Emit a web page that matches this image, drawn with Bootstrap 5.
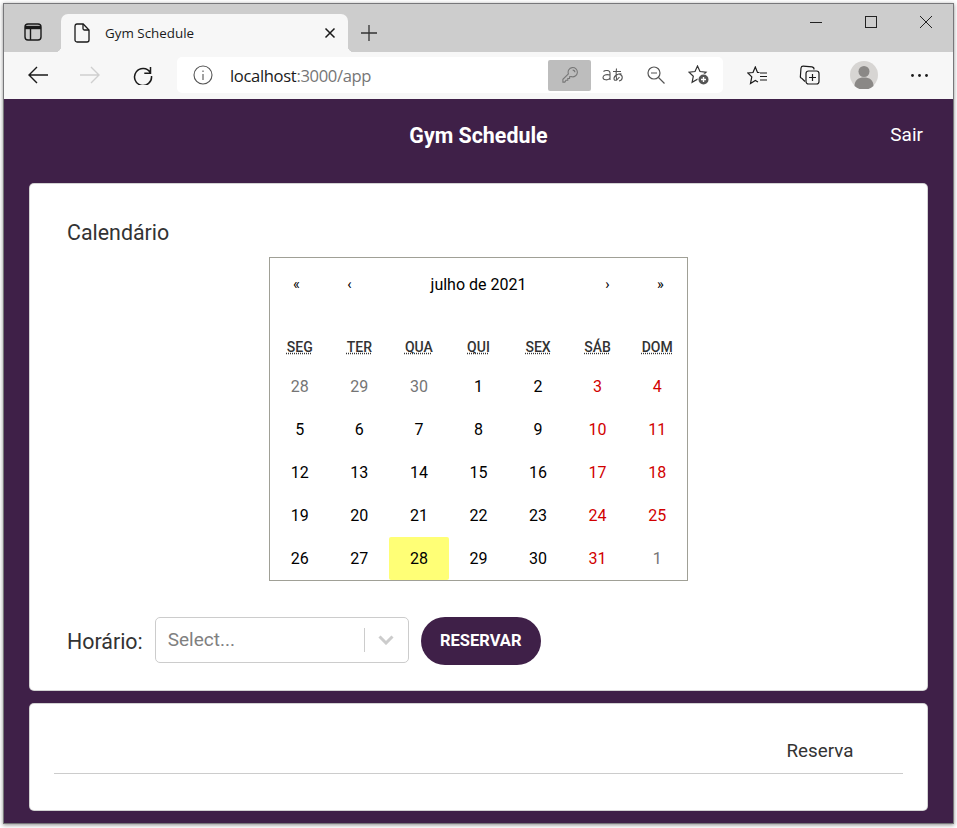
<!DOCTYPE html>
<html lang="pt-BR">
<head>
    <meta charset="UTF-8">
    <title>Gym Schedule</title>
    <link href="https://cdn.jsdelivr.net/npm/bootstrap@5.3.0/dist/css/bootstrap.min.css" rel="stylesheet">
    <script src="https://cdn.jsdelivr.net/npm/bootstrap@5.3.0/dist/js/bootstrap.bundle.min.js"></script>

    <style>
        html, body {
            height: 100%;
            overflow: hidden;
            background-color: #fff;
        }
        body {
            padding: 3px 3px 4px 3px;
            font-family: Roboto, sans-serif;
        }
        svg {
            display: block;
        }
        .browser-win {
            height: 100%;
            border: 1px solid #77777a;
            box-shadow: 0 1px 4px rgba(0, 0, 0, .45);
        }
        /* browser chrome */
        .tab-strip {
            height: 48px;
            background-color: #cdcdcd;
        }
        .tab-menu {
            width: 57px;
        }
        .tab-page {
            position: relative;
            width: 287px;
            height: 38px;
            padding: 0 12px 0 13px;
            background-color: #f7f7f7;
            border-radius: 7px 7px 0 0;
            font: 13.4px "Open Sans", sans-serif;
            color: #1a1a1a;
        }
        /* little flared feet at the bottom corners of the active tab */
        .tab-page::before,
        .tab-page::after {
            content: "";
            position: absolute;
            bottom: 0;
            width: 6px;
            height: 6px;
        }
        .tab-page::before {
            left: -6px;
            background: radial-gradient(circle at 0 0, transparent 6px, #f7f7f7 6.5px);
        }
        .tab-page::after {
            right: -6px;
            background: radial-gradient(circle at 100% 0, transparent 6px, #f7f7f7 6.5px);
        }
        .tab-title {
            margin-left: 15px;
        }
        .tab-new {
            width: 42px;
            height: 38px;
        }
        .win-btn {
            width: 55px;
            height: 35px;
        }
        .tool-bar {
            height: 47px;
            padding-left: 8px;
            background-color: #f7f7f7;
        }
        .tool-btn {
            width: 52px;
        }
        .tool-btn-reload {
            width: 54px;
        }
        .tool-btn-avatar {
            width: 58px;
        }
        .addr-bar {
            width: 546px;
            height: 36px;
            margin: 0 8px 0 7px;
            padding-left: 16px;
            padding-right: 3px;
            background-color: #fff;
            border-radius: 5px;
            font: 16.6px "Open Sans", sans-serif;
            letter-spacing: -.35px;
            color: #1a1a1a;
        }
        .addr-text {
            margin-left: 17px;
        }
        .addr-dim {
            color: #767676;
        }
        .key-box {
            width: 43px;
            height: 31px;
            background-color: #bdbdbd;
            border-radius: 2px;
        }
        .addr-icon {
            width: 43px;
        }
        /* app */
        .app-main {
            height: 725px;
            padding: 0 25px;
            background-color: #3f2048;
            color: #fff;
        }
        .app-head {
            height: 84px;
            position: relative;
        }
        .app-name {
            font-size: 21.4px;
            font-weight: 700;
            margin: 0 0 10px;
        }
        .app-exit {
            position: absolute;
            right: 5px;
            top: 22px;
            font-size: 19px;
            color: #fff;
            text-decoration: none;
        }
        .panel {
            background-color: #fff;
            border-radius: 5px;
            color: #333;
        }
        .panel-cal {
            height: 508px;
            padding: 36px 37px 0;
            margin-bottom: 12px;
        }
        .panel-title {
            font-size: 21.4px;
            line-height: 25px;
            margin: 0 0 12px;
            font-weight: 400;
        }
        .cal-box {
            width: 419px;
            height: 324px;
            margin-left: 202px;
            border: 1px solid #a0a096;
            color: #000;
        }
        .cal-nav {
            height: 54px;
            margin-bottom: 18px;
            font-size: 16px;
        }
        .cal-nav-btn {
            width: 53px;
            text-align: center;
            font-size: 14.5px;
        }
        .cal-week,
        .cal-days {
            display: grid;
            grid-template-columns: repeat(7, 59.57px);
        }
        .cal-week {
            height: 35px;
            align-items: center;
            font-size: 14px;
            font-weight: 500;
            text-align: center;
            color: #333;
        }
        .cal-week abbr {
            text-decoration: underline dotted;
        }
        .cal-days > div {
            height: 43px;
            line-height: 43px;
            text-align: center;
            font-size: 16px;
        }
        .cal-days .day-off {
            color: #d10000;
        }
        .cal-days .day-out {
            color: #757575;
        }
        .cal-days .day-now {
            background-color: #ffff76;
            border-radius: 2px;
        }
        .form-row {
            margin-top: 36px;
        }
        .form-label-big {
            font-size: 21.4px;
            margin-right: 12px;
            padding-top: 2px;
        }
        .fake-select {
            width: 254px;
            height: 46px;
            border: 1px solid #ccc;
            border-radius: 5px;
            padding-left: 12px;
            font-size: 19px;
            color: #808080;
        }
        .fake-sep {
            width: 1px;
            height: 24px;
            background-color: #ccc;
        }
        .fake-arrow {
            width: 43px;
        }
        .btn-book {
            width: 120px;
            height: 48px;
            margin-left: 12px;
            border: 0;
            border-radius: 24px;
            background-color: #3f2048;
            color: #fff;
            font-size: 16.5px;
            font-weight: 700;
        }
        .panel-list {
            height: 108px;
            padding: 0 24px;
        }
        .list-table {
            margin: 0;
        }
        .list-table th {
            height: 70px;
            padding: 25px 0 0;
            vertical-align: middle;
            font-size: 18.8px;
            font-weight: 400;
            color: #333;
            border-bottom: 1px solid #ccc;
        }
        .list-table th:last-child {
            width: 166px;
            text-align: center;
        }
    </style>
</head>
<body>

<div class="browser-win d-flex flex-column">
    <!-- tab strip -->
    <div class="tab-strip d-flex align-items-end">
        <div class="tab-menu d-flex justify-content-center align-items-center h-100 pt-2">
            <svg width="18" height="18" viewBox="0 0 18 18" fill="none" stroke="#1a1a1a" stroke-width="1.4">
                <rect x="1" y="1" width="16" height="16" rx="3"/>
                <path d="M1 4.5h16" stroke-width="3.4"/>
                <path d="M6.5 5v12"/>
            </svg>
        </div>
        <div class="tab-page d-flex align-items-center">
            <svg width="16" height="20" viewBox="0 0 16 20" fill="none" stroke="#1a1a1a" stroke-width="1.3">
                <path d="M2.8 1h6.4L15 7v10a2 2 0 0 1-2 2H3a2 2 0 0 1-2-2V3a2 2 0 0 1 1.8-2z"/>
                <path d="M9 1v4.5A1.5 1.5 0 0 0 10.5 7H15"/>
            </svg>
            <span class="tab-title flex-grow-1">Gym Schedule</span>
            <svg width="12" height="12" viewBox="0 0 12 12" stroke="#1a1a1a" stroke-width="1.5">
                <path d="M1.5 1.5l9 9M10.5 1.5l-9 9"/>
            </svg>
        </div>
        <div class="tab-new d-flex justify-content-center align-items-center">
            <svg width="16" height="16" viewBox="0 0 16 16" stroke="#333" stroke-width="1.3">
                <path d="M8 0v16M0 8h16"/>
            </svg>
        </div>
        <div class="ms-auto d-flex align-self-start">
            <div class="win-btn d-flex justify-content-center align-items-center">
                <svg width="12" height="12" viewBox="0 0 12 12" stroke="#222"><path d="M0 6.5h12"/></svg>
            </div>
            <div class="win-btn d-flex justify-content-center align-items-center">
                <svg width="12" height="12" viewBox="0 0 12 12" fill="none" stroke="#222"><rect x=".5" y=".5" width="11" height="11"/></svg>
            </div>
            <div class="win-btn d-flex justify-content-center align-items-center">
                <svg width="12" height="12" viewBox="0 0 12 12" stroke="#222"><path d="M0 0l12 12M12 0L0 12"/></svg>
            </div>
        </div>
    </div>

    <!-- toolbar -->
    <div class="tool-bar d-flex align-items-center">
        <div class="tool-btn d-flex justify-content-center">
            <svg width="20" height="18" viewBox="0 0 20 18" fill="none" stroke="#1a1a1a" stroke-width="1.4"><path d="M20 9H1M9 1L1 9l8 8"/></svg>
        </div>
        <div class="tool-btn d-flex justify-content-center">
            <svg width="20" height="18" viewBox="0 0 20 18" fill="none" stroke="#cfcfcf" stroke-width="1.4"><path d="M0 9h19M11 1l8 8-8 8"/></svg>
        </div>
        <div class="tool-btn-reload d-flex justify-content-center">
            <svg width="20" height="20" viewBox="0 0 20 20" fill="none" stroke="#1a1a1a" stroke-width="1.5"><path d="M17.5 2v6.200h-6.200M17.300 7.500A8.500 8.500 0 1 0 18.500 11"/></svg>
        </div>
        <div class="addr-bar d-flex align-items-center">
            <svg width="20" height="20" viewBox="0 0 20 20" fill="none" stroke="#555" stroke-width="1.1">
                <circle cx="10" cy="10" r="9"/>
                <path d="M10 9v6M10 5.500v1.500"/>
            </svg>
            <span class="addr-text flex-grow-1">localhost<span class="addr-dim">:3000/app</span></span>
            <div class="key-box d-flex justify-content-center align-items-center">
                <svg width="16" height="16" viewBox="0 0 18 18" fill="none" stroke="#777" stroke-width="1.2">
                    <path d="M1 17v-3.200l6.200-6.200A5.200 5.200 0 1 1 10.500 10.800L8.500 11v2H6.500v2H4.500L3.200 17z"/>
                    <path d="M12 3.500a2.500 2.500 0 0 1 2.500 2.500"/>
                </svg>
            </div>
            <div class="addr-icon d-flex justify-content-center">
                <svg width="22" height="16" viewBox="0 0 22 16" fill="none" stroke="#555" stroke-width="1.1">
                    <path d="M1.500 4.500C3 3 8 3 8 6v7M8 8C4 7 1 8 1 10.500S6 14 8 11"/>
                    <path d="M11 4.500h8M14.500 1.500c-.5 4-.5 9 .5 12M19.500 7c-2-.7-7.500 1-7.500 4.500 0 3 3 2 5.500-1.500M17.500 7.500c3.500.2 4 5.500-.5 6.500"/>
                </svg>
            </div>
            <div class="addr-icon d-flex justify-content-center">
                <svg width="18" height="18" viewBox="0 0 18 18" fill="none" stroke="#555" stroke-width="1.2">
                    <circle cx="7" cy="7" r="6"/>
                    <path d="M4 7h6M11.500 11.500L17.500 17.500"/>
                </svg>
            </div>
            <div class="addr-icon d-flex justify-content-center">
                <svg width="21" height="20" viewBox="0 0 21 20" fill="none" stroke="#333" stroke-width="1.2">
                    <path d="M9.500 1l2.500 5.500 6 .7-4.300 4.100 1.200 6-5.400-3-5.400 3 1.200-6L1 7.200l6-.7z"/>
                    <circle cx="15.500" cy="14.500" r="6" fill="#fff" stroke="none"/>
                    <circle cx="15.500" cy="14.500" r="5" fill="#555" stroke="none"/>
                    <path d="M15.500 12v5M13 14.500h5" stroke="#fff" stroke-width="1.400"/>
                </svg>
            </div>
        </div>
        <div class="tool-btn d-flex justify-content-center">
            <svg width="21" height="19" viewBox="0 0 21 19" fill="none" stroke="#1a1a1a" stroke-width="1.2">
                <path d="M12.500 6.500h-2L8.300 1 6 6.500.8 7l4 3.900-1.300 6.600 4.800-3 2.700 1.500"/>
                <path d="M13 7h7M13 10.500h7M13 14h7"/>
            </svg>
        </div>
        <div class="tool-btn d-flex justify-content-center">
            <svg width="21" height="20" viewBox="0 0 21 20" fill="none" stroke="#1a1a1a" stroke-width="1.2">
                <path d="M6 16.500L3 13.500a2 2 0 0 1-1.600-2.300L2 3A2.200 2.200 0 0 1 4.200 1.200L13 1.800a2.500 2.500 0 0 1 2 2.700"/>
                <rect x="7" y="6" width="13" height="13" rx="2.500"/>
                <path d="M13.500 9v7M10 12.500h7"/>
            </svg>
        </div>
        <div class="tool-btn-avatar d-flex justify-content-center">
            <svg width="28" height="28" viewBox="0 0 28 28">
                <circle cx="14" cy="14" r="14" fill="#d7d5d3"/>
                <circle cx="14" cy="10.500" r="5.500" fill="#8a8886"/>
                <path d="M4.500 25c0-6 4-8.500 9.500-8.500s9.500 2.500 9.500 8.500a14 14 0 0 1-19 0z" fill="#8a8886"/>
            </svg>
        </div>
        <div class="tool-btn d-flex justify-content-center">
            <svg width="17" height="3" viewBox="0 0 17 3" fill="#1a1a1a">
                <circle cx="1.500" cy="1.500" r="1.400"/><circle cx="8.500" cy="1.500" r="1.400"/><circle cx="15.500" cy="1.500" r="1.400"/>
            </svg>
        </div>
    </div>

    <!-- app -->
    <div class="app-main flex-grow-1">
        <header class="app-head d-flex justify-content-center align-items-center">
            <h1 class="app-name">Gym Schedule</h1>
            <a class="app-exit" href="#">Sair</a>
        </header>

        <section class="card panel panel-cal">
            <h2 class="panel-title">Calendário</h2>
            <div class="cal-box">
                <div class="cal-nav d-flex align-items-center">
                    <div class="cal-nav-btn">«</div>
                    <div class="cal-nav-btn">‹</div>
                    <div class="flex-grow-1 text-center">julho de 2021</div>
                    <div class="cal-nav-btn">›</div>
                    <div class="cal-nav-btn">»</div>
                </div>
                <div class="cal-week">
                    <div><abbr title="segunda-feira">SEG</abbr></div>
                    <div><abbr title="terça-feira">TER</abbr></div>
                    <div><abbr title="quarta-feira">QUA</abbr></div>
                    <div><abbr title="quinta-feira">QUI</abbr></div>
                    <div><abbr title="sexta-feira">SEX</abbr></div>
                    <div><abbr title="sábado">SÁB</abbr></div>
                    <div><abbr title="domingo">DOM</abbr></div>
                </div>
                <div class="cal-days">
                    <div class="day-out">28</div><div class="day-out">29</div><div class="day-out">30</div><div>1</div><div>2</div><div class="day-off">3</div><div class="day-off">4</div>
                    <div>5</div><div>6</div><div>7</div><div>8</div><div>9</div><div class="day-off">10</div><div class="day-off">11</div>
                    <div>12</div><div>13</div><div>14</div><div>15</div><div>16</div><div class="day-off">17</div><div class="day-off">18</div>
                    <div>19</div><div>20</div><div>21</div><div>22</div><div>23</div><div class="day-off">24</div><div class="day-off">25</div>
                    <div>26</div><div>27</div><div class="day-now">28</div><div>29</div><div>30</div><div class="day-off">31</div><div class="day-out">1</div>
                </div>
            </div>
            <div class="form-row d-flex align-items-center">
                <span class="form-label-big">Horário:</span>
                <div class="fake-select d-flex align-items-center align-self-start">
                    <span class="flex-grow-1">Select...</span>
                    <span class="fake-sep"></span>
                    <span class="fake-arrow d-flex justify-content-center">
                        <svg width="16" height="10" viewBox="0 0 16 10" fill="none" stroke="#ccc" stroke-width="3"><path d="M1.500 1.500L8 8l6.500-6.500"/></svg>
                    </span>
                </div>
                <button type="button" class="btn-book">RESERVAR</button>
            </div>
        </section>

        <section class="card panel panel-list">
            <table class="list-table w-100">
                <thead>
                    <tr><th></th><th>Reserva</th></tr>
                </thead>
            </table>
        </section>
    </div>
</div>

</body>
</html>
